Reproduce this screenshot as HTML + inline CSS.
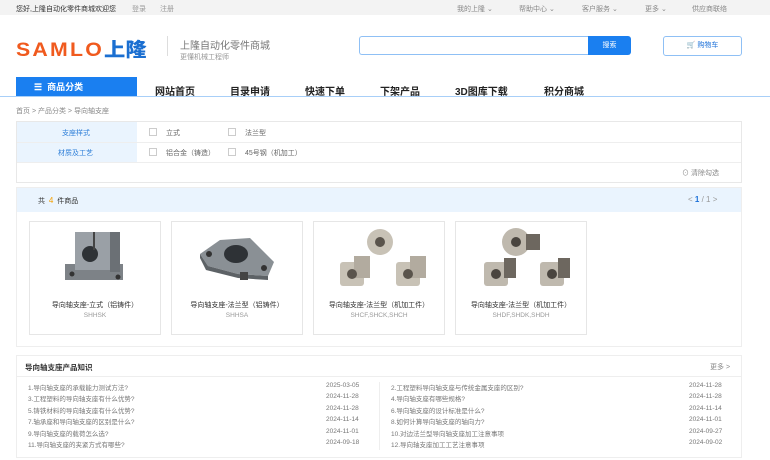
<!DOCTYPE html>
<html><head><meta charset="utf-8"><style>
*{margin:0;padding:0;box-sizing:border-box}
body{width:770px;height:460px;overflow:hidden;background:#fff;font-family:"Liberation Sans","Noto Sans CJK SC",sans-serif;position:relative;color:#333}
.a{position:absolute;white-space:nowrap}
.t{font-size:7px;color:#666}
.nav{font-size:10px;font-weight:bold;color:#222;top:83px}
.card{position:absolute;top:221px;width:132px;height:114px;border:1px solid #e6e6e6;background:#fff}
.card .n{position:absolute;top:78px;width:100%;text-align:center;font-size:7px;color:#333}
.card .c{position:absolute;top:90px;width:100%;text-align:center;font-size:6.5px;color:#999}
.cb{position:absolute;width:8px;height:8px;border:1px solid #ccc;background:#fff}
.k{font-size:6.5px;color:#777;position:absolute}
</style></head><body>
<div class="a" style="left:0;top:0;width:770px;height:15px;background:#f3f3f3"></div>
<div class="a t" style="left:16px;top:4px;color:#333">您好,上隆自动化零件商城欢迎您</div>
<div class="a t" style="left:132px;top:4px;color:#999">登录</div>
<div class="a t" style="left:160px;top:4px;color:#999">注册</div>
<div class="a t" style="left:457px;top:4px;color:#888">我的上隆 ⌄</div>
<div class="a t" style="left:519px;top:4px;color:#888">帮助中心 ⌄</div>
<div class="a t" style="left:582px;top:4px;color:#888">客户服务 ⌄</div>
<div class="a t" style="left:645px;top:4px;color:#888">更多 ⌄</div>
<div class="a t" style="left:692px;top:4px;color:#888">供应商联络</div>

<div class="a" style="left:16px;top:35px;font-size:19px;font-weight:900;color:#f05a1e;letter-spacing:2px;transform:scaleX(1.12);transform-origin:left">SAMLO<span style="color:#1b6fd1;letter-spacing:0">上隆</span></div>
<div class="a" style="left:167px;top:36px;width:1px;height:20px;background:#ddd"></div>
<div class="a" style="left:180px;top:37px;font-size:10px;color:#777">上隆自动化零件商城</div>
<div class="a" style="left:180px;top:52px;font-size:7px;color:#999">更懂机械工程师</div>
<div class="a" style="left:359px;top:36px;width:230px;height:19px;border:1px solid #8fc0f5;border-right:none;border-radius:3px 0 0 3px"></div>
<div class="a" style="left:588px;top:36px;width:43px;height:19px;background:#1a7ff0;border-radius:0 3px 3px 0;color:#fff;font-size:7px;text-align:center;line-height:19px">搜索</div>
<div class="a" style="left:663px;top:36px;width:79px;height:20px;border:1px solid #8fc0f5;border-radius:3px;color:#1a6fd8;font-size:7px;text-align:center;line-height:18px">🛒 购物车</div>

<div class="a" style="left:16px;top:77px;width:121px;height:20px;background:#1a7ff0;color:#fff;font-size:9px;font-weight:bold;line-height:20px;padding-left:18px">☰&nbsp; 商品分类</div>
<div class="a nav" style="left:155px">网站首页</div>
<div class="a nav" style="left:230px">目录申请</div>
<div class="a nav" style="left:305px">快速下单</div>
<div class="a nav" style="left:380px">下架产品</div>
<div class="a nav" style="left:455px">3D图库下载</div>
<div class="a nav" style="left:544px">积分商城</div>
<div class="a" style="left:0;top:96px;width:770px;height:1px;background:#a8cff8"></div>
<div class="a t" style="left:16px;top:106px;color:#888">首页 &gt; 产品分类 &gt; 导向轴支座</div>

<div class="a" style="left:16px;top:121px;width:726px;height:62px;border:1px solid #e8e8e8"></div>
<div class="a" style="left:17px;top:122px;width:120px;height:40px;background:#eaf4fe"></div>
<div class="a" style="left:17px;top:142px;width:724px;height:1px;background:#eee"></div>
<div class="a" style="left:17px;top:162px;width:724px;height:1px;background:#eee"></div>
<div class="a" style="left:62px;top:128px;font-size:7px;color:#2f7fd8">支座样式</div>
<div class="a" style="left:58px;top:148px;font-size:7px;color:#2f7fd8">材质及工艺</div>
<div class="cb" style="left:149px;top:128px"></div><div class="a t" style="left:166px;top:128px">立式</div>
<div class="cb" style="left:228px;top:128px"></div><div class="a t" style="left:245px;top:128px">法兰型</div>
<div class="cb" style="left:149px;top:148px"></div><div class="a t" style="left:166px;top:148px">铝合金（铸造）</div>
<div class="cb" style="left:228px;top:148px"></div><div class="a t" style="left:245px;top:148px">45号钢（机加工）</div>
<div class="a t" style="left:682px;top:168px;color:#888">⊙ 清除勾选</div>

<div class="a" style="left:16px;top:187px;width:726px;height:160px;border:1px solid #eee"></div>
<div class="a" style="left:17px;top:188px;width:724px;height:24px;background:#eaf4fe"></div>
<div class="a t" style="left:38px;top:196px;color:#333">共 &nbsp;<span style="color:#f5a000;font-size:8px">4</span>&nbsp; 件商品</div>
<div class="a t" style="left:688px;top:195px;font-size:8px;color:#999">&lt; <b style="color:#1a6fd8">1</b> / 1 &gt;</div>

<div class="card" style="left:29px">
<svg width="132" height="76" viewBox="0 0 132 76"><rect x="35" y="42" width="58" height="16" fill="#7d8287"/><rect x="45" y="10" width="40" height="38" fill="#9aa0a6"/><rect x="80" y="10" width="10" height="40" fill="#6b7075"/><circle cx="60" cy="32" r="8" fill="#2e3236"/><rect x="63" y="10" width="2" height="18" fill="#444"/><circle cx="42" cy="52" r="2.5" fill="#333"/><circle cx="88" cy="55" r="2.5" fill="#333"/></svg>
<div class="n">导向轴支座-立式（铝铸件）</div><div class="c">SHHSK</div></div>
<div class="card" style="left:171px">
<svg width="132" height="76" viewBox="0 0 132 76"><polygon points="28,32 48,18 78,16 102,40 96,54 66,52 36,44" fill="#8a9095"/><polygon points="28,32 36,44 66,52 96,54 96,58 66,56 34,48 28,36" fill="#5d6266"/><ellipse cx="64" cy="32" rx="12" ry="9" fill="#2e3236"/><circle cx="37" cy="32" r="3" fill="#333"/><circle cx="92" cy="46" r="3" fill="#333"/><rect x="68" y="50" width="8" height="8" fill="#444"/></svg>
<div class="n">导向轴支座-法兰型（铝铸件）</div><div class="c">SHHSA</div></div>
<div class="card" style="left:313px">
<svg width="132" height="76" viewBox="0 0 132 76"><g fill="#c8c2b6"><circle cx="66" cy="20" r="13"/><rect x="26" y="40" width="24" height="24" rx="3"/><rect x="82" y="40" width="24" height="24" rx="3"/><rect x="40" y="34" width="16" height="22" fill="#b2ab9f"/><rect x="96" y="34" width="16" height="22" fill="#b2ab9f"/></g><circle cx="66" cy="20" r="5" fill="#5a544c"/><circle cx="38" cy="52" r="5" fill="#5a544c"/><circle cx="94" cy="52" r="5" fill="#5a544c"/></svg>
<div class="n">导向轴支座-法兰型（机加工件）</div><div class="c">SHCF,SHCK,SHCH</div></div>
<div class="card" style="left:455px">
<svg width="132" height="76" viewBox="0 0 132 76"><g fill="#bfb9ae"><circle cx="60" cy="20" r="14"/><rect x="28" y="40" width="24" height="24" rx="3"/><rect x="84" y="40" width="24" height="24" rx="3"/></g><rect x="70" y="12" width="14" height="16" fill="#6d675f"/><rect x="48" y="36" width="12" height="20" fill="#6d675f"/><rect x="102" y="36" width="12" height="20" fill="#6d675f"/><circle cx="60" cy="20" r="5" fill="#4a453f"/><circle cx="40" cy="52" r="5" fill="#4a453f"/><circle cx="96" cy="52" r="5" fill="#4a453f"/></svg>
<div class="n">导向轴支座-法兰型（机加工件）</div><div class="c">SHDF,SHDK,SHDH</div></div>

<div class="a" style="left:16px;top:355px;width:726px;height:103px;border:1px solid #eee"></div>
<div class="a" style="left:17px;top:376px;width:724px;height:1px;background:#eee"></div>
<div class="a" style="left:25px;top:362px;font-size:7.5px;font-weight:bold;color:#333">导向轴支座产品知识</div>
<div class="a t" style="left:710px;top:362px;color:#888">更多 &gt;</div>
<div class="a" style="left:379px;top:382px;width:1px;height:68px;background:#eee"></div>
<div class="k" style="left:28px;top:382px">1.导向轴支座的承载能力测试方法?</div><div class="k" style="left:326px;top:382px">2025-03-05</div>
<div class="k" style="left:28px;top:393px">3.工程塑料的导向轴支座有什么优势?</div><div class="k" style="left:326px;top:393px">2024-11-28</div>
<div class="k" style="left:28px;top:405px">5.铸铁材料的导向轴支座有什么优势?</div><div class="k" style="left:326px;top:405px">2024-11-28</div>
<div class="k" style="left:28px;top:416px">7.轴承座和导向轴支座的区别是什么?</div><div class="k" style="left:326px;top:416px">2024-11-14</div>
<div class="k" style="left:28px;top:428px">9.导向轴支座的载荷怎么选?</div><div class="k" style="left:326px;top:428px">2024-11-01</div>
<div class="k" style="left:28px;top:439px">11.导向轴支座的夹紧方式有哪些?</div><div class="k" style="left:326px;top:439px">2024-09-18</div>
<div class="k" style="left:391px;top:382px">2.工程塑料导向轴支座与传统金属支座的区别?</div><div class="k" style="left:689px;top:382px">2024-11-28</div>
<div class="k" style="left:391px;top:393px">4.导向轴支座有哪些规格?</div><div class="k" style="left:689px;top:393px">2024-11-28</div>
<div class="k" style="left:391px;top:405px">6.导向轴支座的设计标准是什么?</div><div class="k" style="left:689px;top:405px">2024-11-14</div>
<div class="k" style="left:391px;top:416px">8.如何计算导向轴支座的轴向力?</div><div class="k" style="left:689px;top:416px">2024-11-01</div>
<div class="k" style="left:391px;top:428px">10.对边法兰型导向轴支座加工注意事项</div><div class="k" style="left:689px;top:428px">2024-09-27</div>
<div class="k" style="left:391px;top:439px">12.导向轴支座加工工艺注意事项</div><div class="k" style="left:689px;top:439px">2024-09-02</div>
</body></html>
